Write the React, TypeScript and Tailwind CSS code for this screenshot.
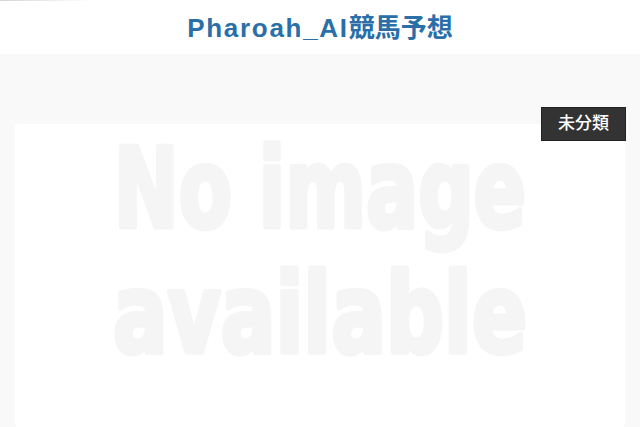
export default function App() {
  return (
    <div className="min-h-[427px] bg-[#f9f9f9] font-['Liberation_Sans','Noto_Sans_CJK_JP',sans-serif]">
      {/* header */}
      <header className="relative h-[54px] bg-white">
        <div className="absolute left-0 top-0 h-px w-[90px] bg-gradient-to-r from-[#d4d4d4] to-transparent" />
        <h1 className="flex h-full items-center justify-center pt-[2px] text-[26px] font-bold text-[#2a6fa7]">
          <span className="tracking-[1.7px]">Pharoah_AI</span>
          <span>競馬予想</span>
        </h1>
      </header>

      <main className="px-[15px] pt-[70px]">
        <article className="relative rounded-[3px] bg-white">
          <span className="absolute right-0 top-[-16px] flex h-8 w-[83px] items-center justify-center bg-[#333333] text-[17px] font-medium text-white ring-1 ring-[#222]">
            未分類
          </span>

          <svg viewBox="0 0 610 303" className="block h-[303px] w-full">
            <g
              fill="#f5f5f5"
              stroke="#f5f5f5"
              strokeWidth="5"
              strokeLinejoin="round"
              fontFamily="'DejaVu Sans Condensed', 'DejaVu Sans', sans-serif"
              fontWeight="bold"
              fontSize="110"
            >
              <text x="99" y="103" textLength="412" lengthAdjust="spacingAndGlyphs">
                No image
              </text>
              <text x="98" y="228" textLength="414" lengthAdjust="spacingAndGlyphs">
                available
              </text>
            </g>
          </svg>
        </article>
      </main>
    </div>
  );
}
